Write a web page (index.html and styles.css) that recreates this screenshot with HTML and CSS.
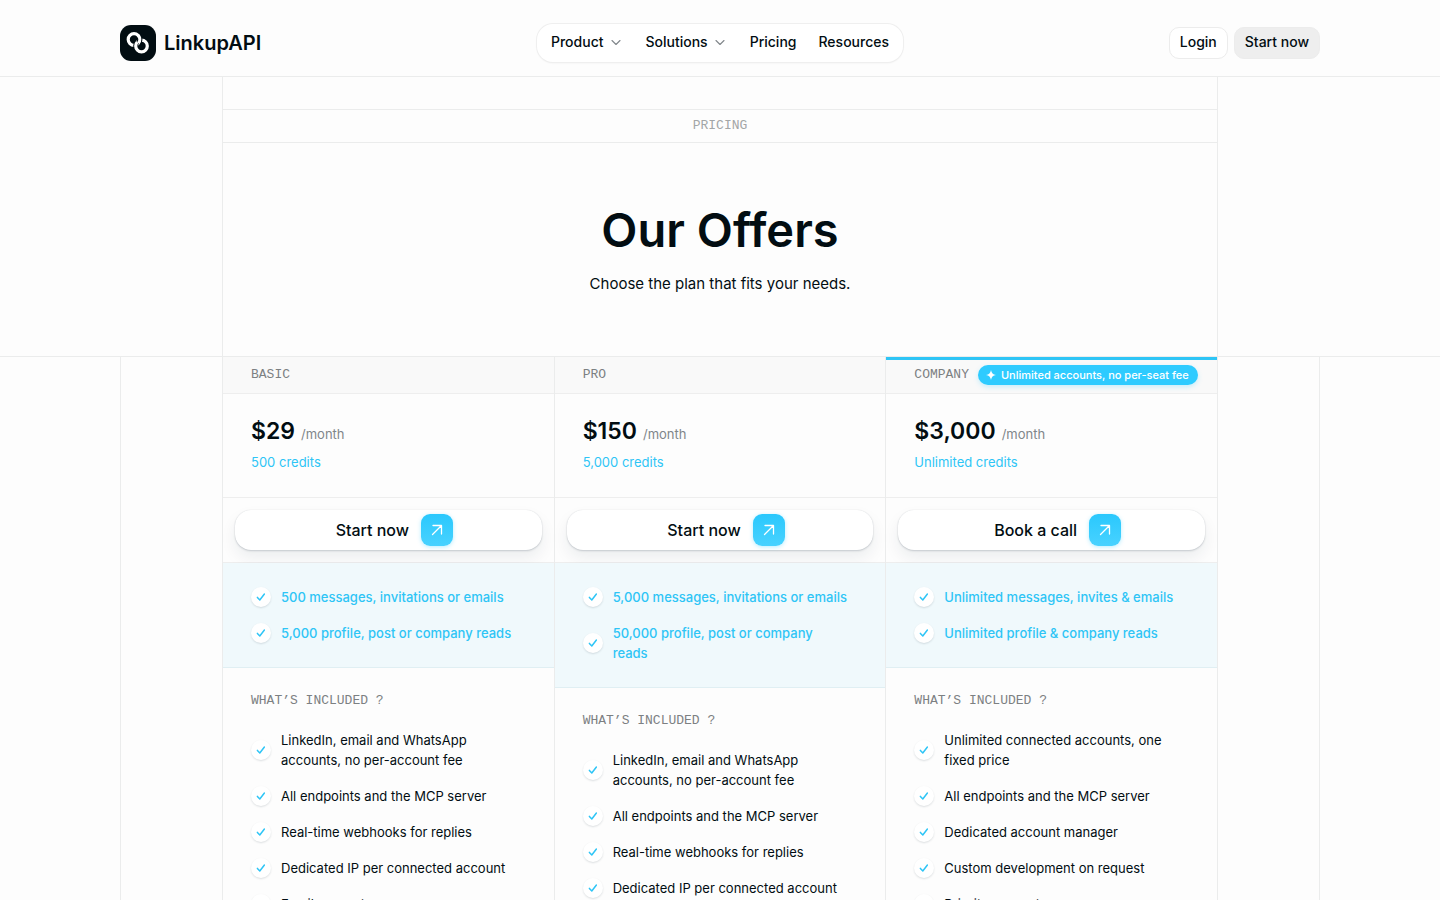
FILE: index.html
```html
<!DOCTYPE html>
<html lang="en">
<head>
  <meta charset="UTF-8" />
  <meta name="viewport" content="width=device-width, initial-scale=1.0"/>
  <title>Pricing - LinkupAPI</title>
  <link rel="stylesheet" href="styles.css">
</head>
<body>

<!-- Shared icons -->
<svg class="sprite" aria-hidden="true">
  <symbol id="check" viewBox="0 0 20 20">
    <path d="M6.4 10.4l2.4 2.6 4.6-6" fill="none" stroke="currentColor" stroke-width="1.5" stroke-linecap="round" stroke-linejoin="round"/>
  </symbol>
  <symbol id="arrow" viewBox="0 0 32 32">
    <path d="M11.5 20.5l9-9M12 11.5h8.500v8.500" fill="none" stroke="currentColor" stroke-width="1.3" stroke-linecap="round" stroke-linejoin="round"/>
  </symbol>
  <symbol id="chevron" viewBox="0 0 14 14">
    <path d="M2 5.500l4 4 4-4" fill="none" stroke="currentColor" stroke-width="1.1" stroke-linecap="round" stroke-linejoin="round"/>
  </symbol>
</svg>

<header class="site-header">
  <div class="header-inner">
    <a class="brand" href="#">
      <svg class="brand-mark" viewBox="0 0 36 36" aria-hidden="true">
        <rect width="36" height="36" rx="11" fill="#020d12"/>
        <g fill="none">
          <circle cx="14" cy="14.500" r="5.800" stroke="#fff" stroke-width="3.200"/>
          <circle cx="21.500" cy="21" r="5.800" stroke="#020d12" stroke-width="5"/>
          <circle cx="21.500" cy="21" r="5.800" stroke="#fff" stroke-width="3.200"/>
          <path d="M19 11.600A5.800 5.800 0 0 1 18.400 18.200" stroke="#020d12" stroke-width="5"/>
          <path d="M18.300 10.600A5.800 5.800 0 0 1 18.400 18.200" stroke="#fff" stroke-width="3.200"/>
        </g>
      </svg>
      <span>LinkupAPI</span>
    </a>

    <nav class="main-nav">
      <button type="button">Product <svg><use href="#chevron"/></svg></button>
      <button type="button">Solutions <svg><use href="#chevron"/></svg></button>
      <a href="#pricing">Pricing</a>
      <a href="#resources">Resources</a>
    </nav>

    <div class="header-actions">
      <a class="btn btn-outline" href="#login">Login</a>
      <a class="btn btn-grey" href="#start">Start now</a>
    </div>
  </div>
</header>

<main>
  <!-- Hero -->
  <section class="hero">
    <div class="hero-inner">
      <p class="eyebrow">PRICING</p>
      <div class="hero-text">
        <h1>Our Offers</h1>
        <p>Choose the plan that fits your needs.</p>
      </div>
    </div>
  </section>

  <!-- Plans -->
  <section class="plans" id="pricing">
    <div class="plan-grid">

      <article class="plan">
        <div class="plan-head"><h2>BASIC</h2></div>
        <div class="plan-price">
          <p class="price"><span class="amount">$29</span> <span class="period">/month</span></p>
          <p class="credits">500 credits</p>
        </div>
        <div class="plan-cta">
          <a class="cta" href="#start">Start now <svg><use href="#arrow"/></svg></a>
        </div>
        <ul class="feature-list highlights">
          <li><svg><use href="#check"/></svg><span>500 messages, invitations or emails</span></li>
          <li><svg><use href="#check"/></svg><span>5,000 profile, post or company reads</span></li>
        </ul>
        <div class="included">
          <h3>WHAT’S INCLUDED ?</h3>
          <ul class="feature-list">
            <li><svg><use href="#check"/></svg><span>LinkedIn, email and WhatsApp accounts, no per-account fee</span></li>
            <li><svg><use href="#check"/></svg><span>All endpoints and the MCP server</span></li>
            <li><svg><use href="#check"/></svg><span>Real-time webhooks for replies</span></li>
            <li><svg><use href="#check"/></svg><span>Dedicated IP per connected account</span></li>
            <li><svg><use href="#check"/></svg><span>Email support</span></li>
          </ul>
        </div>
      </article>

      <article class="plan">
        <div class="plan-head"><h2>PRO</h2></div>
        <div class="plan-price">
          <p class="price"><span class="amount">$150</span> <span class="period">/month</span></p>
          <p class="credits">5,000 credits</p>
        </div>
        <div class="plan-cta">
          <a class="cta" href="#start">Start now <svg><use href="#arrow"/></svg></a>
        </div>
        <ul class="feature-list highlights">
          <li><svg><use href="#check"/></svg><span>5,000 messages, invitations or emails</span></li>
          <li><svg><use href="#check"/></svg><span>50,000 profile, post or company<br>reads</span></li>
        </ul>
        <div class="included">
          <h3>WHAT’S INCLUDED ?</h3>
          <ul class="feature-list">
            <li><svg><use href="#check"/></svg><span>LinkedIn, email and WhatsApp accounts, no per-account fee</span></li>
            <li><svg><use href="#check"/></svg><span>All endpoints and the MCP server</span></li>
            <li><svg><use href="#check"/></svg><span>Real-time webhooks for replies</span></li>
            <li><svg><use href="#check"/></svg><span>Dedicated IP per connected account</span></li>
          </ul>
        </div>
      </article>

      <article class="plan plan-featured">
        <div class="plan-head">
          <h2>COMPANY</h2>
          <span class="badge">
            <svg viewBox="0 0 10 10" aria-hidden="true"><path d="M5 0c.6 3.200 1.800 4.400 5 5-3.200.6-4.400 1.800-5 5-.6-3.200-1.800-4.400-5-5 3.200-.6 4.400-1.800 5-5z" fill="#fff"/></svg>
            Unlimited accounts, no per-seat fee
          </span>
        </div>
        <div class="plan-price">
          <p class="price"><span class="amount">$3,000</span> <span class="period">/month</span></p>
          <p class="credits">Unlimited credits</p>
        </div>
        <div class="plan-cta">
          <a class="cta" href="#call">Book a call <svg><use href="#arrow"/></svg></a>
        </div>
        <ul class="feature-list highlights">
          <li><svg><use href="#check"/></svg><span>Unlimited messages, invites &amp; emails</span></li>
          <li><svg><use href="#check"/></svg><span>Unlimited profile &amp; company reads</span></li>
        </ul>
        <div class="included">
          <h3>WHAT’S INCLUDED ?</h3>
          <ul class="feature-list">
            <li><svg><use href="#check"/></svg><span>Unlimited connected accounts, one fixed price</span></li>
            <li><svg><use href="#check"/></svg><span>All endpoints and the MCP server</span></li>
            <li><svg><use href="#check"/></svg><span>Dedicated account manager</span></li>
            <li><svg><use href="#check"/></svg><span>Custom development on request</span></li>
            <li><svg><use href="#check"/></svg><span>Priority support</span></li>
          </ul>
        </div>
      </article>

    </div>
  </section>
</main>

</body>
</html>
```
FILE: styles.css
```css
* {
  box-sizing: border-box;
}

body {
  font-family: Inter, sans-serif;
  margin: 0;
  background: #fdfdfd;
  color: #020d12;
  font-size: 14px;
  line-height: 20px;
}

h1, h2, h3, p, ul {
  margin: 0;
  padding: 0;
}

a {
  color: inherit;
  text-decoration: none;
}

.sprite {
  display: none;
}

/* Header */
.site-header {
  padding: 24px 24px 14px;
  border-bottom: 1px solid #ebecec;
}

.header-inner {
  max-width: 1200px;
  margin: 0 auto;
  display: grid;
  grid-template-columns: 1fr auto 1fr;
  align-items: center;
}

.brand {
  display: flex;
  align-items: center;
  gap: 8px;
  font-size: 20px;
  font-weight: 600;
}

.brand-mark {
  width: 36px;
  height: 36px;
}

.main-nav {
  display: flex;
  align-items: center;
  gap: 22px;
  height: 38px;
  padding: 0 14px 2px;
  background: #fff;
  border-radius: 16px;
  box-shadow: 0 0 0 1px #efefef, 0 1px 2px rgba(0,0,0,0.08);
}

.main-nav a, .main-nav button {
  display: flex;
  align-items: center;
  gap: 6px;
  padding: 0;
  border: 0;
  background: none;
  color: inherit;
  font: inherit;
  font-weight: 500;
}

.main-nav svg {
  width: 14px;
  height: 14px;
  color: #80868a;
}

.header-actions {
  display: flex;
  justify-content: flex-end;
  gap: 6px;
}

.btn {
  padding: 4px 10px 6px;
  border: 1px solid #ececec;
  border-radius: 10px;
  font-weight: 500;
}

.btn-outline {
  background: #fff;
}

.btn-grey {
  background: #eeeeee;
}

/* Hero */
.hero {
  border-bottom: 1px solid #ebecec;
}

.hero-inner {
  max-width: 996px;
  margin: 0 auto;
  padding-top: 32px;
  border: 1px solid #ebecec;
  border-width: 0 1px;
  text-align: center;
}

.eyebrow, .plan-head h2, .included h3 {
  font-family: "Liberation Mono", monospace;
  font-size: 13px;
  font-weight: 400;
}

.eyebrow {
  padding: 6px 0;
  border: 1px solid #ebecec;
  border-width: 1px 0;
  color: #a3a6a7;
}

.hero-text {
  padding: 55px 24px 60px;
}

.hero-text h1 {
  font-size: 47px;
  line-height: 64px;
  font-weight: 600;
}

.hero-text p {
  margin-top: 10px;
  font-size: 15px;
  line-height: 24px;
}

/* Plans */
.plans {
  max-width: 1200px;
  margin: 0 auto;
  border: 1px solid #ebecec;
  border-width: 0 1px;
}

.plan-grid {
  display: grid;
  grid-template-columns: repeat(3, 1fr);
  max-width: 996px;
  margin: 0 auto;
  border-left: 1px solid #ebecec;
}

.plan {
  border-right: 1px solid #ebecec;
}

.plan-head {
  display: flex;
  align-items: center;
  gap: 9px;
  height: 37px;
  padding: 0 16px 0 28px;
  background: #f9f9f9;
  border-bottom: 1px solid #eeeeee;
}

.plan-head h2, .included h3 {
  color: #7c8082;
}

.plan-featured .plan-head {
  box-shadow: inset 0 3px #2ec5f6;
}

.badge {
  display: flex;
  align-items: center;
  gap: 5px;
  height: 20px;
  padding: 0 9px 0 8px;
  border-radius: 10px;
  background: #2ecbff;
  color: #fff;
  font-size: 11px;
  font-weight: 500;
  white-space: nowrap;
  box-shadow: 0 2px 5px rgba(46,203,255,0.25);
}

.badge svg {
  width: 10px;
  height: 10px;
}

.plan-price {
  padding: 20px 28px 24px;
  border-bottom: 1px solid #eeeeee;
}

.price {
  display: flex;
  align-items: baseline;
  gap: 6px;
}

.amount {
  font-size: 23px;
  line-height: 35px;
  font-weight: 600;
}

.period {
  color: #80868a;
  font-size: 13px;
}

.credits {
  padding: 3px 0 1px;
  color: #2ec5f6;
  font-size: 13px;
}

.plan-cta {
  padding: 12px;
  border-bottom: 1px solid #eeeeee;
}

.cta {
  display: flex;
  align-items: center;
  justify-content: center;
  gap: 12px;
  height: 40px;
  padding-left: 12px;
  border-radius: 16px;
  background: #fff;
  font-size: 16px;
  font-weight: 500;
  box-shadow: 0 0 1px rgba(20,40,60,0.15), 0 1px 2px rgba(20,40,60,0.18), 0 8px 16px rgba(20,40,60,0.07);
}

.cta svg {
  width: 32px;
  height: 32px;
  border-radius: 9px;
  background: linear-gradient(#2ac8fd, #48d2ff);
  color: #fff;
  box-shadow: 0 1px 4px rgba(46,203,255,0.35);
}

.feature-list {
  display: flex;
  flex-direction: column;
  gap: 16px;
  list-style: none;
  font-size: 13px;
}

.feature-list li {
  display: flex;
  align-items: center;
  gap: 10px;
}

.feature-list svg {
  flex: none;
  width: 20px;
  height: 20px;
  border-radius: 50%;
  background: #fff;
  color: #2ec5f6;
  box-shadow: 0 1px 2px rgba(20,40,60,0.14);
}

.highlights {
  padding: 24px 28px;
  background: #f0f9fc;
  border-bottom: 1px solid #e0eff3;
  color: #2ec5f6;
  font-weight: 500;
}

.included {
  padding: 24px 28px;
}

.included h3 {
  margin-bottom: 20px;
  line-height: 18px;
}
```
